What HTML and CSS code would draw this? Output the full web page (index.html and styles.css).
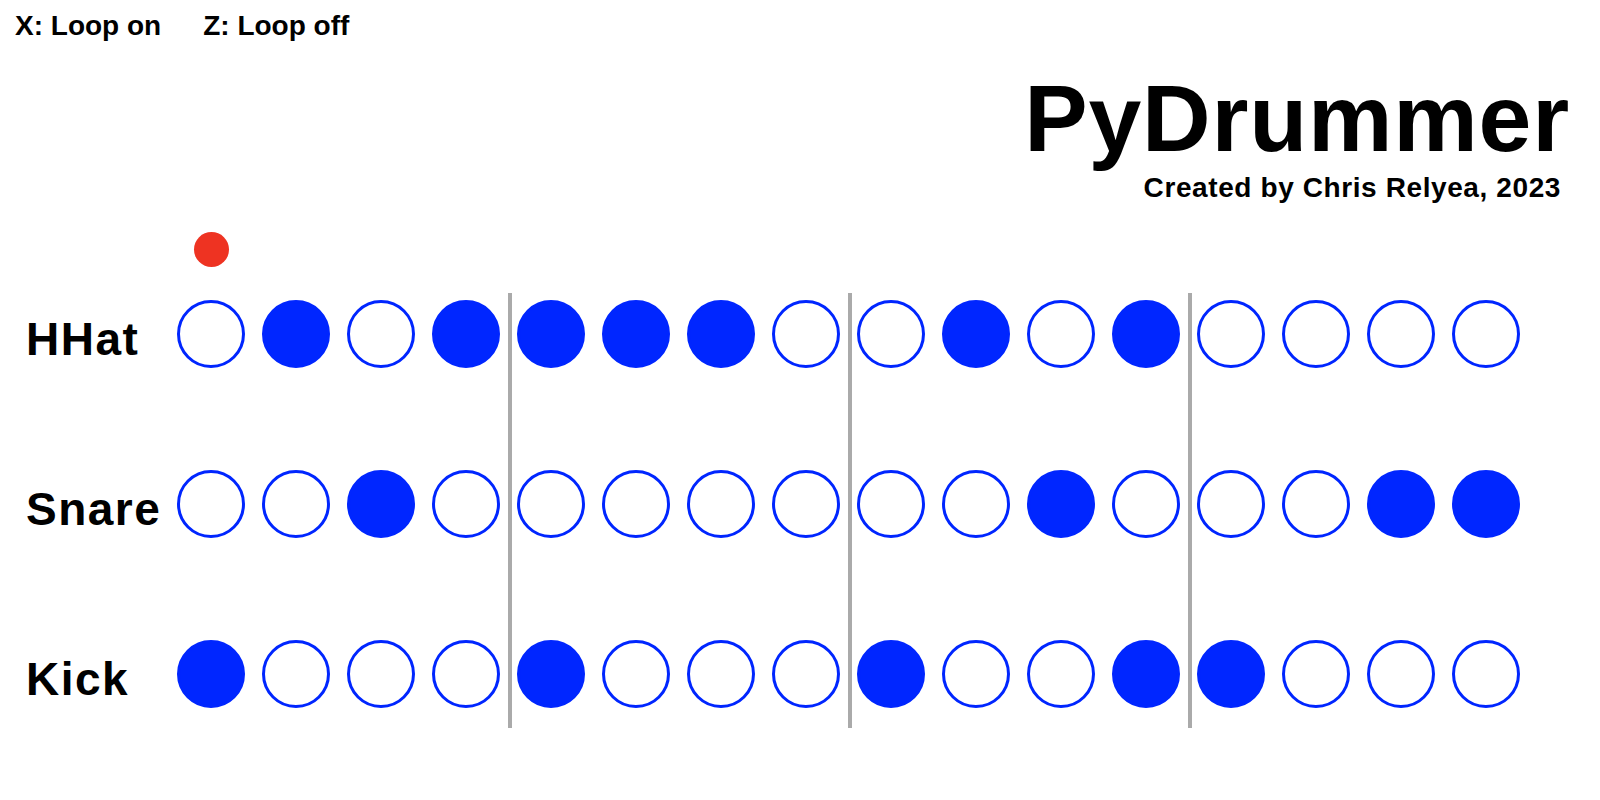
FILE: index.html
```html
<!DOCTYPE html>
<html lang="en">
<head>
    <meta charset="utf-8">
    <title>PyDrummer</title>
    <link rel="stylesheet" href="styles.css">
</head>
<body>
    <div class="keys">
        <span class="key">X: Loop on</span>
        <span class="key">Z: Loop off</span>
    </div>

    <div class="title">
        <h1>PyDrummer</h1>
        <p class="credit">Created by Chris Relyea, 2023</p>
    </div>

    <div class="playhead"><span class="dot"></span></div>

    <div class="board">
        <div class="labels">
            <div class="label">HHat</div>
            <div class="label">Snare</div>
            <div class="label">Kick</div>
        </div>

        <div class="bars">
            <!-- bar 1 -->
            <div class="bar">
                <span class="step"></span><span class="step on"></span><span class="step"></span><span class="step on"></span>
                <span class="step"></span><span class="step"></span><span class="step on"></span><span class="step"></span>
                <span class="step on"></span><span class="step"></span><span class="step"></span><span class="step"></span>
            </div>
            <!-- bar 2 -->
            <div class="bar">
                <span class="step on"></span><span class="step on"></span><span class="step on"></span><span class="step"></span>
                <span class="step"></span><span class="step"></span><span class="step"></span><span class="step"></span>
                <span class="step on"></span><span class="step"></span><span class="step"></span><span class="step"></span>
            </div>
            <!-- bar 3 -->
            <div class="bar">
                <span class="step"></span><span class="step on"></span><span class="step"></span><span class="step on"></span>
                <span class="step"></span><span class="step"></span><span class="step on"></span><span class="step"></span>
                <span class="step on"></span><span class="step"></span><span class="step"></span><span class="step on"></span>
            </div>
            <!-- bar 4 -->
            <div class="bar">
                <span class="step"></span><span class="step"></span><span class="step"></span><span class="step"></span>
                <span class="step"></span><span class="step"></span><span class="step on"></span><span class="step on"></span>
                <span class="step on"></span><span class="step"></span><span class="step"></span><span class="step"></span>
            </div>
        </div>
    </div>
</body>
</html>
```

FILE: styles.css
```css
/* General Styles */
* {
    margin: 0;
    padding: 0;
    box-sizing: border-box;
    font-family: "Liberation Sans", Arial, sans-serif;
}

body {
    background: white;
    color: black;
    width: 1600px;
    height: 800px;
    overflow: hidden;
}

/* Key hints */
.keys {
    display: flex;
    gap: 42px;
    padding: 12px 15px 0;
    font-size: 28px;
    line-height: 28px;
    font-weight: bold;
}

/* Title */
.title {
    margin-top: 31px;
    padding-right: 30px;
    text-align: right;
}

.title h1 {
    font-size: 95px;
    line-height: 95px;
    font-weight: bold;
    letter-spacing: 0.8px;
}

.credit {
    margin-top: 8px;
    padding-right: 9px;
    font-size: 28px;
    line-height: 28px;
    font-weight: bold;
    letter-spacing: 0.6px;
}

/* Playhead */
.playhead {
    margin-top: 30px;
    padding-left: 194px;
    height: 35px;
}

.dot {
    display: block;
    width: 35px;
    height: 35px;
    border-radius: 50%;
    background: #ee3322;
}

/* Sequencer */
.board {
    display: flex;
    margin-top: 26px;
    padding-left: 26px;
}

.labels {
    width: 151px;
    padding-top: 12px;
    display: flex;
    flex-direction: column;
    gap: 102px;
}

.label {
    height: 68px;
    line-height: 68px;
    font-size: 46px;
    font-weight: bold;
    letter-spacing: 1.5px;
}

.bars {
    display: flex;
    gap: 8px;
}

.bar {
    display: grid;
    grid-template-columns: repeat(4, 68px);
    grid-auto-rows: 68px;
    column-gap: 17px;
    row-gap: 102px;
    padding: 7px 0 20px;
}

.bar + .bar {
    border-left: 4px solid #aaaaaa;
    padding-left: 5px;
}

.step {
    display: block;
    width: 68px;
    height: 68px;
    border-radius: 50%;
    border: 3px solid #0026ff;
}

.step.on {
    background: #0026ff;
}
```
